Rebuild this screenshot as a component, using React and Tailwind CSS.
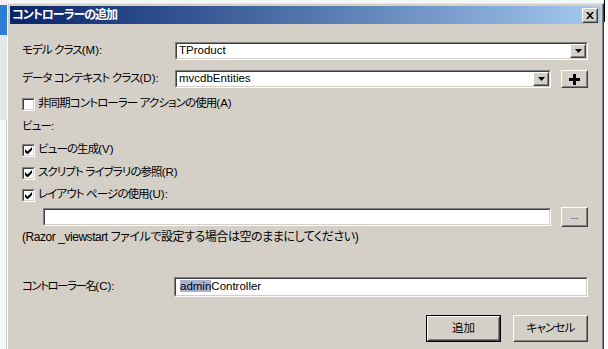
import React from "react";

function Sunken({ className = "", innerClass = "", children }) {
  return (
    <div className={"border border-t-[#808080] border-l-[#808080] border-r-white border-b-white " + className}>
      <div className={"h-full w-full border border-t-[#404040] border-l-[#404040] border-r-[#d4d0c8] border-b-[#d4d0c8] bg-white " + innerClass}>
        {children}
      </div>
    </div>
  );
}

function Raised({ className = "", innerClass = "", children }) {
  return (
    <div className={"border border-t-white border-l-white border-r-[#404040] border-b-[#404040] bg-[#d4d0c8] " + className}>
      <div className={"h-full w-full border border-t-[#d4d0c8] border-l-[#d4d0c8] border-r-[#808080] border-b-[#808080] flex items-center justify-center " + innerClass}>
        {children}
      </div>
    </div>
  );
}

function J({ children, className = "tracking-[-0.9px]" }) {
  return <span className={className}>{children}</span>;
}

function DropBtn() {
  return (
    <Raised className="w-[16px] h-full shrink-0">
      <svg width="7" height="4" viewBox="0 0 7 4">
        <path d="M0 0h7L3.5 4z" fill="#000" />
      </svg>
    </Raised>
  );
}

function Combo({ text, className = "" }) {
  return (
    <Sunken className={"h-[18px] " + className} innerClass="flex items-center">
      <div className="flex-1 pl-[2px] text-[11.5px] leading-none">{text}</div>
      <DropBtn />
    </Sunken>
  );
}

function Check({ checked }) {
  return (
    <Sunken className="w-[13px] h-[13px] shrink-0" innerClass="flex items-center justify-center">
      {checked && (
        <svg width="7" height="7" viewBox="0 0 7 7">
          <path d="M0 2v3l2 2h1l4-4V0L2.5 4.5z" fill="#000" />
        </svg>
      )}
    </Sunken>
  );
}

function CheckRow({ checked, children, className = "" }) {
  return (
    <div className={"flex items-center h-[16px] gap-[3px] " + className}>
      <Check checked={checked} />
      <span>{children}</span>
    </div>
  );
}

export default function App() {
  return (
    <div className="w-[608px] h-[349px] overflow-hidden flex bg-[#f4f6f8] text-black font-['Liberation_Sans','Noto_Sans_CJK_JP',sans-serif] text-[12px] leading-none [font-feature-settings:'palt']">
      {/* left background strip */}
      <div className="w-[7px] shrink-0 flex flex-col">
        <div className="h-[5px] bg-[#f0f0f0]" />
        <div className="h-[30px] bg-[#2a7fd4]" />
        <div className="h-[85px] bg-[#e4e6ea]" />
        <div className="flex-1 bg-[#f6f8fa] border-r border-[#c8c8c8]" />
      </div>

      {/* dialog */}
      <div className="mt-[3px] w-[597px] h-[360px] shrink-0 border border-t-[#e8e8e8] border-l-white border-r-[#404040] border-b-[#404040] bg-[#d4d0c8]">
        <div className="h-full p-[2px] border-r border-[#808080] flex flex-col">
          {/* title bar */}
          <div className="h-[18px] shrink-0 flex items-center justify-between bg-gradient-to-r from-[#0a246a] to-[#a6caf0] pl-[2px] pr-[2px]">
            <span className="text-white font-bold text-[12px] tracking-[-1px]">コントローラーの追加</span>
            <Raised className="w-[16px] h-[15px]">
              <svg width="8" height="7" viewBox="0 0 8 7">
                <path d="M0 0h2l2 2.2L6 0h2L5 3.5 8 7H6L4 4.8 2 7H0l3-3.5z" fill="#000" />
              </svg>
            </Raised>
          </div>

          {/* body */}
          <div className="flex flex-col pl-[12px] pr-[12px] text-[11.5px]">
            <div className="flex items-center h-[18px] mt-[18px]">
              <span className="w-[153px] shrink-0"><J>モデル クラス</J>(M):</span>
              <Combo text="TProduct" className="w-[414px]" />
            </div>

            <div className="flex items-center h-[18px] mt-[10px]">
              <span className="w-[153px] shrink-0"><J>データ コンテキスト クラス</J>(D):</span>
              <Combo text="mvcdbEntities" className="w-[378px]" />
              <Raised className="ml-[10px] w-[27px] h-[18px]">
                <svg width="11" height="11" viewBox="0 0 11 11">
                  <path d="M4 0h3v4h4v3H7v4H4V7H0V4h4z" fill="#000" />
                </svg>
              </Raised>
            </div>

            <CheckRow className="mt-[8px]"><J>非同期コントローラー アクションの使用</J>(A)</CheckRow>

            <div className="flex items-center h-[16px] mt-[7px]"><J>ビュー</J>:</div>

            <CheckRow className="mt-[7px]" checked><J>ビューの生成</J>(V)</CheckRow>
            <CheckRow className="mt-[7px]" checked><J>スクリプト ライブラリの参照</J>(R)</CheckRow>
            <CheckRow className="mt-[6px]" checked><J>レイアウト ページの使用</J>(U):</CheckRow>

            <div className="flex items-center h-[20px] mt-[4px] pl-[21px]">
              <Sunken className="w-[510px] h-[18px]" />
              <Raised className="ml-[10px] w-[27px] h-[20px]">
                <span className="text-[9px] leading-none -mt-[2px]">...</span>
              </Raised>
            </div>

            <div className="flex items-center h-[14px] mt-[3px] text-[12px] tracking-[-0.45px]">
              (Razor _viewstart ファイルで設定する場合は空のままにしてください)
            </div>

            <div className="flex items-center h-[20px] mt-[33px]">
              <span className="w-[152px] shrink-0"><J className="tracking-[-1.5px]">コントローラー名</J>(C):</span>
              <Sunken className="w-[415px] h-[20px]" innerClass="flex items-center">
                <span className="ml-[4px] text-[11.5px] leading-none">
                  <span className="bg-[#a9b3cf]">admin</span>Controller
                </span>
              </Sunken>
            </div>

            <div className="flex justify-end h-[27px] mt-[18px] gap-[12px]">
              <div className="border border-black">
                <Raised className="w-[73px] h-[25px]">追加</Raised>
              </div>
              <Raised className="w-[75px] h-[27px]"><J className="tracking-[-0.8px]">キャンセル</J></Raised>
            </div>
          </div>
        </div>
      </div>

      {/* right strip */}
      <div className="flex-1 bg-white flex flex-col">
        <div className="h-[22px] border-l border-black" />
      </div>
    </div>
  );
}
